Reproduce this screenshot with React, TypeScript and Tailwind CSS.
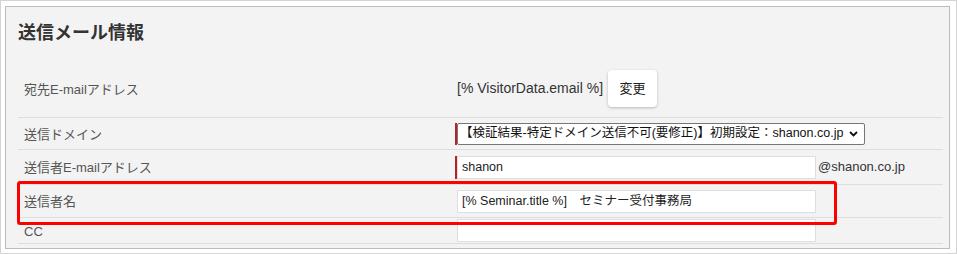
import React from "react";

const FONT = { fontFamily: '"Liberation Sans", "Noto Sans CJK JP", sans-serif' };

function Row({
  label,
  h,
  children,
}: {
  label: string;
  h: string;
  children?: React.ReactNode;
}) {
  return (
    <div className={`flex items-center border-b border-[#dddddd] ${h}`}>
      <div className="w-[437px] pl-[6px] pt-[2px] text-[13px] text-[#555]">{label}</div>
      <div className="flex items-center">{children}</div>
    </div>
  );
}

function TextBox({ value, required }: { value?: string; required?: boolean }) {
  return (
    <div className={`flex ${required ? "border-l-2 border-[#b8212a]" : "pl-[2px]"}`}>
      <div className="flex h-[23px] w-[359px] items-center whitespace-nowrap border border-[#dedede] bg-white pl-[4px] text-[12.5px] text-[#222]">
        {value}
      </div>
    </div>
  );
}

export default function App() {
  return (
    <div style={FONT} className="h-[254px] w-[957px] border border-[#d4d4d4] bg-white pt-[5px] pl-[4px] pr-[6px] pb-[5px]">
      <div className="relative h-[243px] border border-[#bcbcbc] bg-[#f3f3f3] pl-[12px] pr-[6px]">
        <h2 className="pt-[14px] text-[18px] font-bold leading-[24px] text-[#333]">送信メール情報</h2>

        <div className="mt-[15px]">
          <Row label="宛先E-mailアドレス" h="h-[58px]">
            <span className="pl-[2px] text-[14px] text-[#333]">[% VisitorData.email %]</span>
            <button className="ml-[5px] h-[37px] w-[49px] rounded-[4px] bg-white text-[13px] text-[#222] shadow-[0_1px_3px_rgba(0,0,0,0.25)]">
              変更
            </button>
          </Row>

          <Row label="送信ドメイン" h="h-[32px]">
            <div className="flex border-l-2 border-[#b8212a]">
              <div className="flex h-[22px] w-[408px] items-center justify-between whitespace-nowrap rounded-[2px] border border-[#767676] bg-white pl-[2px] pr-[6px] text-[12.5px] text-[#111]">
                <span>【検証結果-特定ドメイン送信不可(要修正)】初期設定：shanon.co.jp</span>
                <svg width="9" height="6" viewBox="0 0 9 6" fill="none">
                  <path d="M1 1l3.5 3.5L8 1" stroke="#111" strokeWidth="1.8" />
                </svg>
              </div>
            </div>
          </Row>

          <Row label="送信者E-mailアドレス" h="h-[35px]">
            <TextBox value="shanon" required />
            <span className="pl-[2px] text-[13px] text-[#333]">@shanon.co.jp</span>
          </Row>

          <Row label="送信者名" h="h-[33px]">
            <TextBox value="[% Seminar.title %]　セミナー受付事務局" />
          </Row>

          <Row label="CC" h="h-[26px]">
            <TextBox />
          </Row>
        </div>

        {/* highlight overlay */}
        <div className="pointer-events-none absolute left-[11px] top-[174px] h-[44px] w-[820px] rounded-[3px] border-[3px] border-[#ff0000]" />
      </div>
    </div>
  );
}
